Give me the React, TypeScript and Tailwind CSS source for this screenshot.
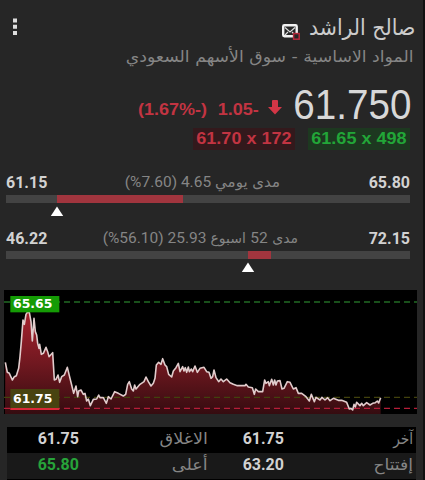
import type { ReactNode } from "react";

const series =
  "16,232 22,262 28,265 37,285 43,275 49,272 56,250 60,215 64,170 69,105 73,118 78,88 82,82 88,82 93,110 97,168 102,100 106,140 110,150 113,175 117,190 119,178 124,208 130,205 138,187 143,200 147,215 158,203 163,285 168,283 174,270 179,292 185,275 193,270 202,247 208,272 215,300 221,325 228,303 233,335 236,318 243,315 250,328 255,325 260,348 265,342 271,362 280,343 290,342 296,330 300,338 310,338 319,355 325,335 333,342 344,320 355,325 370,333 377,328 383,298 388,290 395,312 400,318 404,300 408,312 420,298 432,290 438,276 445,290 453,303 460,295 465,280 469,240 476,232 483,238 488,221 495,240 500,245 506,268 515,276 520,258 528,248 535,235 540,260 548,245 552,258 556,248 560,262 565,246 568,260 574,252 578,260 585,243 592,262 600,250 612,247 620,260 627,262 633,280 638,275 642,255 648,278 656,290 663,282 670,290 680,282 690,293 700,298 712,302 735,302 738,298 745,306 757,308 763,328 767,312 775,320 788,320 794,285 798,295 805,290 808,302 815,283 820,300 824,285 828,300 832,288 840,287 846,312 852,310 862,290 870,292 880,312 888,308 895,325 905,325 918,335 928,348 934,328 943,350 948,337 960,345 966,337 975,345 983,338 990,347 1000,340 1015,346 1025,346 1040,352 1048,372 1053,370 1058,375 1062,358 1066,366 1070,352 1080,362 1085,355 1090,362 1100,353 1110,360 1118,355 1126,353 1132,348 1136,354 1142,338";

const num = "font-['Roboto'] text-[17px] leading-[20px] font-bold text-[#d2d2d2]";

function Range({ low, high, label, value, fill, pointer, gap }: {
  low: string; high: string; label: ReactNode; value: string; fill: string; pointer: string; gap: string;
}) {
  return (
    <section className="h-[56px] pl-[6px] pr-[13px]">
      <div className="flex h-[23px] items-start justify-between">
        <span className={`${num} w-[42px] origin-left scale-x-[.94]`}>{low}</span>
        <div className={`flex flex-1 justify-end whitespace-nowrap text-[15px] leading-5 text-[#858585] ${gap}`}>
          <span className="font-['Roboto'] text-[15.5px]">{value}</span>
          {label}
        </div>
        <span className={`${num} flex w-[42px] origin-right scale-x-[.94] justify-end`}>{high}</span>
      </div>
      <div className="h-[8px] bg-[#434343]"><div className={`h-full bg-[#a1353e] ${fill}`} /></div>
      <svg className={`mt-[3px] block h-[11px] w-[14px] ${pointer}`} viewBox="0 0 14 11"><path d="M7 .5 13.2 10H.8Z" fill="#fff" /></svg>
    </section>
  );
}

function Arabic({ children, className }: { children: ReactNode; className: string }) {
  return <span dir="rtl" className={`block whitespace-nowrap font-['DejaVu_Sans',sans-serif] ${className}`}>{children}</span>;
}

export default function App() {
  return (
    <main className="h-[480px] w-[425px] overflow-hidden border-r-2 border-[#111] bg-[#262626] font-['Liberation_Sans',sans-serif]">
      <header className="flex h-[46px] items-start justify-between pl-[13px] pr-[8px] pt-[12px]">
        <svg className="mt-[6px] h-[18px] w-[4px]" viewBox="0 0 4 18"><path d="M0 .5h4v4H0zm0 6.3h4v4H0zm0 6.3h4v4H0z" fill="#ddd" /></svg>
        <div className="flex items-start gap-[7px]">
          <svg className="mt-[11px] h-[18px] w-[20px]" viewBox="0 0 20 18" fill="none">
            <rect x="2.2" y="2.2" width="13.5" height="11" rx="1.2" stroke="#f2f2f2" strokeWidth="2.4" />
            <path d="m4 4.5 5 4.5 5-4.5M4 12l3-3m7 3-3-3" stroke="#ddd" strokeWidth="1.2" />
            <rect x="12.6" y="10.6" width="5.6" height="5.6" fill="#262626" stroke="#b42a3b" strokeWidth="1.5" />
          </svg>
          <div className="flex w-[107px] justify-end"><Arabic className="origin-right scale-x-[.93] text-[22px] leading-[31px] text-[#ccc]">صالح الراشد</Arabic></div>
        </div>
      </header>
      <div className="flex h-[38px] justify-end pr-[9px]"><Arabic className="origin-right scale-x-[1.08] text-[16px] leading-[22px] text-[#858585]">المواد الاساسية - سوق الأسهم السعودي</Arabic></div>
      <div className="flex h-[44px] items-start justify-end pr-[12px]">
        <div className="mt-[16px] flex w-[121px] justify-between whitespace-nowrap text-[17px] leading-5 font-bold text-[#c23442]">
          <span className="origin-left scale-x-[1.06]">(1.67%-)</span>
          <span className="origin-right scale-x-[1.06]">1.05-</span>
        </div>
        <svg className="ml-[8px] mt-[15px] h-[17px] w-[16px]" viewBox="0 0 16 17"><path d="M5 2q0-1 1-1h4q1 0 1 1v6h4L8 15.5 1 8h4Z" fill="#d33646" /></svg>
        <span className="flex w-[128px] justify-end text-[42px] leading-[41px] text-[#d8d8d8]"><span className="origin-right scale-x-[.92]">61.750</span></span>
      </div>
      <div className="flex h-[44px] justify-end gap-[13px] pr-[13px] text-[17px] leading-[22px] font-bold">
        <div className="flex h-[22px] w-[102px] justify-center bg-[#33191c] text-[#c23442]"><span className="scale-x-[1.06] whitespace-nowrap">61.70 x 172</span></div>
        <div className="flex h-[22px] w-[102px] justify-center bg-[#1d3820] text-[#22a638]"><span className="scale-x-[1.06] whitespace-nowrap">61.65 x 498</span></div>
      </div>
      <Range low="61.15" high="65.80" value="(%7.60) 4.65" gap="gap-[4px] pr-[88px]" fill="ml-[51px] w-[126px]" pointer="ml-[44px]"
        label={<Arabic className="text-[15px] leading-5">مدى يومي</Arabic>} />
      <Range low="46.22" high="72.15" value="(%56.10) 25.93" gap="gap-[4px] pr-[70px]" fill="ml-[242px] w-[23px]" pointer="ml-[235px]"
        label={<Arabic className="text-[14px] leading-5">مدى <span className="font-['Roboto'] text-[15.5px]">52</span> اسبوع</Arabic>} />
      <section className="mt-[6px] h-[137px] pl-[4px]">
        <svg className="block h-[124px] w-[413px]" viewBox="12 15 1239 372">
          <defs><linearGradient id="area" x1="0" y1="80" x2="0" y2="387" gradientUnits="userSpaceOnUse"><stop stopColor="#a7222e" /><stop offset=".5" stopColor="#711820" /><stop offset="1" stopColor="#350c10" /></linearGradient></defs>
          <path d="M12 15H1251V387H12Z" fill="#000" />
          <polygon points={`15,387 ${series} 1142,387`} fill="url(#area)" />
          <path d="M12 51H1251" stroke="#226b24" strokeWidth="4" strokeDasharray="18 12" />
          <path d="M12 337H1251" stroke="#42420d" strokeWidth="4" strokeDasharray="18 12" />
          <path d="M12 370H1251" stroke="#b51d38" strokeWidth="4" strokeDasharray="18 12" />
          <polyline points={series} fill="none" stroke="#e1cccc" strokeWidth="4.8" strokeLinejoin="round" />
          <rect x="31" y="33" width="147" height="49" fill="#159b05" />
          <rect x="31" y="312" width="147" height="58" fill="#484310" />
          <path d="M31 372H178" stroke="#db2838" strokeWidth="6" />
          <g fill="#fff" fontFamily="DejaVu Sans" fontSize="38" fontWeight="bold">
            <text x="39" y="68" textLength="118" lengthAdjust="spacingAndGlyphs">65.65</text>
            <text x="39" y="353" textLength="118" lengthAdjust="spacingAndGlyphs">61.75</text>
          </g>
        </svg>
      </section>
      <section className="ml-[7px] w-[409px]">
        {[["61.75", "الاغلاق", "61.75", "آخر"], ["65.80", "أعلى", "63.20", "إفتتاح"]].map((row, i) => (
          <div key={row[1]} className={`flex h-[26px] pt-[1px] ${i ? "bg-[#191919]" : "bg-black"}`}>
            <span className={`w-[72px] shrink-0 ${num}`}><span className={`flex justify-end ${i ? "text-[#27a33a]" : ""}`}><span className="origin-right scale-x-[.94]">{row[0]}</span></span></span>
            <span className="flex w-[129px] shrink-0 justify-end"><Arabic className="origin-right scale-x-[1.1] text-[16px] leading-[22px] text-[#858585]">{row[1]}</Arabic></span>
            <span className={`flex w-[76px] shrink-0 justify-end ${num}`}><span className="origin-right scale-x-[.94]">{row[2]}</span></span>
            <span className="flex w-[129px] shrink-0 justify-end"><Arabic className={`origin-right text-[16px] leading-[22px] text-[#858585] ${i ? "scale-x-[1.07]" : "scale-x-[.86]"}`}>{row[3]}</Arabic></span>
          </div>
        ))}
        <div className="h-[1px] bg-black" />
      </section>
    </main>
  );
}
